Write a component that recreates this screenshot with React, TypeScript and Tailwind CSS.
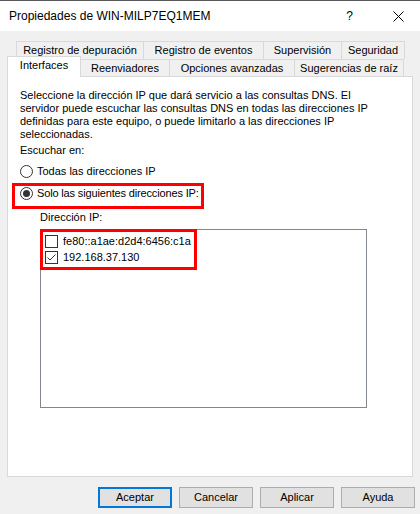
import React from 'react';

const tabBase =
    'flex items-center justify-center border border-[#d9d9d9] whitespace-nowrap';

const Tab = ({ label, width, selected }: { label: string; width: string; selected?: boolean }) => (
    <div
        className={`${tabBase} ${width} ${selected
            ? 'h-[21px] -mb-px bg-white border-b-0 relative z-10 pb-[3px]'
            : 'h-[17px] -ml-px bg-[#f0f0f0] border-b-0'
            }`}
    >
        {label}
    </div>
);

const Radio = ({ checked }: { checked?: boolean }) => (
    <div className="w-[13px] h-[13px] rounded-full border border-[#333333] bg-white flex items-center justify-center shrink-0">
        {checked && <div className="w-[7px] h-[7px] rounded-full bg-[#333333]" />}
    </div>
);

const Check = ({ checked }: { checked?: boolean }) => (
    <div className="w-[13px] h-[13px] border border-[#333333] bg-white shrink-0">
        {checked && (
            <svg width="11" height="11" viewBox="0 0 11 11">
                <path d="M1.5 5.5 L4 8 L9.5 2.5" fill="none" stroke="#333333" strokeWidth="1" />
            </svg>
        )}
    </div>
);

const Button = ({ label, primary }: { label: string; primary?: boolean }) => (
    <button
        className={`w-[74px] h-[21px] bg-[#e1e1e1] flex items-center justify-center ${primary ? 'border-2 border-[#0078d7]' : 'border border-[#adadad]'
            }`}
    >
        {label}
    </button>
);

export default function App() {
    return (
        <div className="w-[420px] h-[514px] bg-[#f0f0f0] flex flex-col overflow-hidden text-black text-[11px] font-['Liberation_Sans',Arial,sans-serif]">
            {/* Title bar */}
            <div className="h-[31px] shrink-0 bg-white border-t border-[#5a5a5a] flex items-center pl-[9px] text-[12px]">
                <span>Propiedades de WIN-MILP7EQ1MEM</span>
                <span className="ml-auto mr-[40px]">?</span>
                <svg width="11" height="11" viewBox="0 0 11 11" className="mr-[16px]">
                    <path d="M0.5 0.5 L10.5 10.5 M10.5 0.5 L0.5 10.5" stroke="#000" strokeWidth="1" />
                </svg>
            </div>

            {/* Tabs */}
            <div className="pt-[10px] shrink-0">
                <div className="flex h-[18px] pl-[16px]">
                    <div className={`${tabBase} w-[128px] h-[18px] border-b-0`}>Registro de depuración</div>
                    <div className={`${tabBase} w-[121px] h-[18px] -ml-px border-b-0`}>Registro de eventos</div>
                    <div className={`${tabBase} w-[79px] h-[18px] -ml-px border-b-0`}>Supervisión</div>
                    <div className={`${tabBase} w-[64px] h-[18px] -ml-px border-b-0`}>Seguridad</div>
                </div>
                <div className="flex items-end h-[17px] pl-[7px]">
                    <Tab label="Interfaces" width="w-[74px]" selected />
                    <Tab label="Reenviadores" width="w-[90px]" />
                    <Tab label="Opciones avanzadas" width="w-[126px]" />
                    <Tab label="Sugerencias de raíz" width="w-[110px]" />
                </div>
            </div>

            {/* Panel */}
            <div className="mx-[7px] h-[401px] shrink-0 bg-white border border-[#d9d9d9] pt-[12px] pl-[12px]">
                <p className="leading-[13px]">
                    Seleccione la dirección IP que dará servicio a las consultas DNS. El<br />
                    servidor puede escuchar las consultas DNS en todas las direcciones IP<br />
                    definidas para este equipo, o puede limitarlo a las direcciones IP<br />
                    seleccionadas.
                </p>
                <div className="leading-[13px] mt-[3px]">Escuchar en:</div>

                <div className="flex items-center gap-[4px] mt-[8px] h-[13px] leading-[13px]">
                    <Radio />
                    <span>Todas las direcciones IP</span>
                </div>

                <div className="relative flex items-center gap-[4px] mt-[9px] h-[13px] leading-[13px]">
                    <Radio checked />
                    <span className="tracking-[-0.15px]">Solo las siguientes direcciones IP:</span>
                    <div className="absolute left-[-8px] top-[-4px] w-[192px] h-[26px] border-[3px] border-[#ff0000]" />
                </div>

                <div className="ml-[20px] mt-[11px] leading-[13px]">Dirección IP:</div>

                <div className="relative ml-[20px] mt-[5px] w-[327px] h-[179px] border border-[#828790] bg-white pt-[3px] pl-[4px]">
                    <div className="flex items-center gap-[5px] h-[16px]">
                        <Check />
                        <span>fe80::a1ae:d2d4:6456:c1a</span>
                    </div>
                    <div className="flex items-center gap-[5px] h-[16px]">
                        <Check checked />
                        <span>192.168.37.130</span>
                    </div>
                    <div className="absolute left-[-1px] top-[-1px] w-[157px] h-[41px] border-[3px] border-[#ff0000]" />
                </div>
            </div>

            {/* Buttons */}
            <div className="flex justify-end gap-[7px] pr-[5px] mt-[10px]">
                <Button label="Aceptar" primary />
                <Button label="Cancelar" />
                <Button label="Aplicar" />
                <Button label="Ayuda" />
            </div>
        </div>
    );
}
